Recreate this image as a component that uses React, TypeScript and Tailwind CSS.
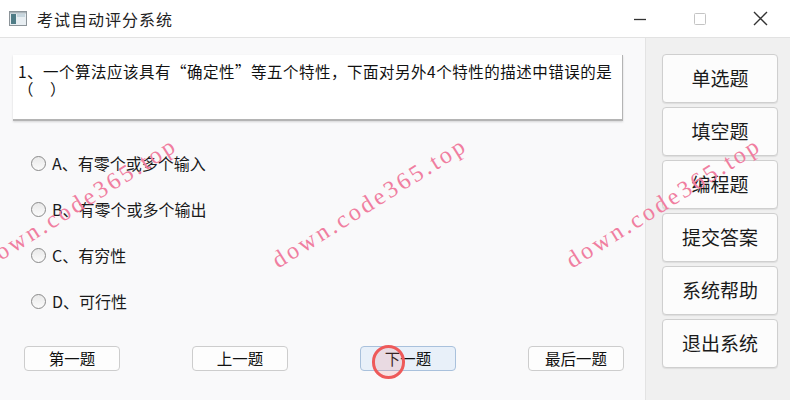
import React from "react";

const cjk = { fontFamily: '"Noto Sans CJK SC", "Noto Sans", sans-serif' };

function Radio({ label }: { label: string }) {
  return (
    <div className="flex items-center h-[20px]">
      <div className="w-[15px] h-[15px] rounded-full border border-[#8a8a8a] bg-gradient-to-b from-[#e9e9e9] to-[#fbfbfb] ml-[31px]" />
      <span className="ml-[6px] text-[16px] leading-[20px] text-[#1a1a1a]" style={cjk}>
        {label}
      </span>
    </div>
  );
}

function NavBtn({ label, hover }: { label: string; hover?: boolean }) {
  return (
    <div
      className={
        hover
          ? "w-[96px] h-[25px] rounded-[4px] border border-[#a9c1dc] bg-[#e8f0f9] flex items-center justify-center text-[15.5px] text-[#111]"
          : "w-[96px] h-[25px] rounded-[4px] border border-[#cdcdcd] bg-[#fdfdfd] flex items-center justify-center text-[15.5px] text-[#111]"
      }
      style={cjk}
    >
      {label}
    </div>
  );
}

function SideBtn({ label }: { label: string }) {
  return (
    <div
      className="w-[116px] h-[49px] rounded-[4px] border border-[#cfcfcf] bg-[#fcfcfc] shadow-[0_1px_1px_rgba(0,0,0,0.08)] flex items-center justify-center text-[19px] text-[#1a1a1a]"
      style={cjk}
    >
      {label}
    </div>
  );
}

function Watermark({ left, top }: { left: number; top: number }) {
  return (
    <span
      className="absolute whitespace-nowrap text-[24px] leading-none text-[#f07ea0] tracking-[3px] origin-left -rotate-[32deg] pointer-events-none"
      style={{ left, top, fontFamily: '"Liberation Serif", serif' }}
    >
      down.code365.top
    </span>
  );
}

export default function App() {
  return (
    <div className="w-[790px] h-[400px] flex flex-col relative overflow-hidden bg-white">
      {/* title bar */}
      <div className="h-[38px] shrink-0 bg-white border-b border-[#e2e2e2] flex items-center">
        <svg width="18" height="15" viewBox="0 0 18 15" className="ml-[9px]">
          <rect x="0.5" y="0.5" width="17" height="14" fill="#e8eef2" stroke="#8c9499" />
          <rect x="2" y="3" width="5" height="10" fill="#4f7c86" />
          <rect x="8" y="3" width="8" height="3" fill="#c7d6de" />
          <rect x="1" y="1" width="16" height="1.5" fill="#a9b4ba" />
        </svg>
        <span className="ml-[10px] text-[16px] tracking-[1px] text-[#222]" style={cjk}>
          考试自动评分系统
        </span>
        <div className="flex-1" />
        <svg width="14" height="14" viewBox="0 0 14 14" className="mr-[46px]">
          <line x1="1" y1="7.5" x2="13" y2="7.5" stroke="#333" strokeWidth="1.3" />
        </svg>
        <svg width="14" height="14" viewBox="0 0 14 14" className="mr-[46px]">
          <rect x="1.5" y="1.5" width="11" height="11" rx="1" fill="none" stroke="#c4c4c4" strokeWidth="1" />
        </svg>
        <svg width="15" height="15" viewBox="0 0 15 15" className="mr-[22px]">
          <path d="M1 1 L14 14 M14 1 L1 14" stroke="#333" strokeWidth="1.4" />
        </svg>
      </div>

      {/* body */}
      <div className="flex-1 flex">
        <div className="w-[645px] bg-[#f9f9fa] flex flex-col pt-[17px]">
          <div className="ml-[13px] w-[610px] h-[66px] bg-white border-b-2 border-r border-[#b4b4b4] shadow-[0_1px_2px_rgba(0,0,0,0.15)] pl-[5px] pt-[8px]">
            <p className="text-[15.5px] leading-[17px] tracking-[0.5px] text-[#111]" style={cjk}>
              1、一个算法应该具有“确定性”等五个特性，下面对另外4个特性的描述中错误的是
              <br />（　）
            </p>
          </div>
          <div className="flex flex-col gap-[26px] mt-[32px]">
            <Radio label="A、有零个或多个输入" />
            <Radio label="B、有零个或多个输出" />
            <Radio label="C、有穷性" />
            <Radio label="D、可行性" />
          </div>
          <div className="flex gap-[72px] pl-[24px] mt-[35px]">
            <NavBtn label="第一题" />
            <NavBtn label="上一题" />
            <NavBtn label="下一题" hover />
            <NavBtn label="最后一题" />
          </div>
        </div>
        <div className="flex-1 bg-[#f0f0f0] border-l border-[#e3e3e3] pt-[16px] pl-[16px] flex flex-col gap-[4px]">
          <SideBtn label="单选题" />
          <SideBtn label="填空题" />
          <SideBtn label="编程题" />
          <SideBtn label="提交答案" />
          <SideBtn label="系统帮助" />
          <SideBtn label="退出系统" />
        </div>
      </div>

      {/* overlays */}
      <Watermark left={-16} top={250} />
      <Watermark left={274} top={250} />
      <Watermark left={568} top={250} />
      <div className="absolute left-[372px] top-[345px] w-[33px] h-[34px] rounded-full border-[3px] border-[#ee5a5a] bg-[rgba(240,120,120,0.18)] blur-[0.6px] pointer-events-none" />
    </div>
  );
}
